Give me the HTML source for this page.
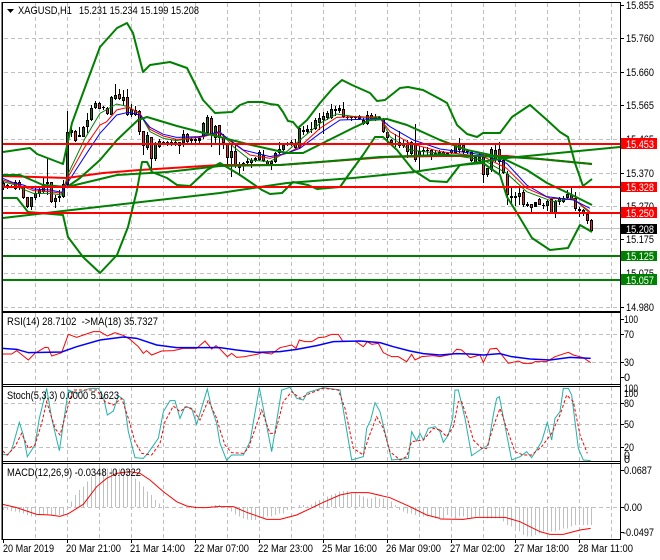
<!DOCTYPE html>
<html><head><meta charset="utf-8"><style>
html,body{margin:0;padding:0;background:#fff}
svg{display:block}
text{font-family:"Liberation Sans",sans-serif;font-size:11px;fill:#000}
.w{fill:#fff}
.n *{vector-effect:non-scaling-stroke;fill:none}
.bb{fill:none;stroke:#008000;stroke-width:2;stroke-linejoin:round}
.t{fill:none;stroke-width:1}
</style></head><body>
<svg width="660" height="560" viewBox="0 0 660 560" xmlns="http://www.w3.org/2000/svg">
<rect width="660" height="560" fill="#fff"/>
<!-- grid -->
<path fill="none" stroke="#c0c0c0" stroke-dasharray="4 3" shape-rendering="crispEdges" d="M35.5 3V309M67.5 3V309M99.5 3V309M131.5 3V309M163.5 3V309M195.5 3V309M227.5 3V309M259.5 3V309M291.5 3V309M323.5 3V309M355.5 3V309M387.5 3V309M419.5 3V309M451.5 3V309M483.5 3V309M515.5 3V309M547.5 3V309M579.5 3V309M611.5 3V309
M35.5 313V384M67.5 313V384M99.5 313V384M131.5 313V384M163.5 313V384M195.5 313V384M227.5 313V384M259.5 313V384M291.5 313V384M323.5 313V384M355.5 313V384M387.5 313V384M419.5 313V384M451.5 313V384M483.5 313V384M515.5 313V384M547.5 313V384M579.5 313V384M611.5 313V384
M35.5 387V461M67.5 387V461M99.5 387V461M131.5 387V461M163.5 387V461M195.5 387V461M227.5 387V461M259.5 387V461M291.5 387V461M323.5 387V461M355.5 387V461M387.5 387V461M419.5 387V461M451.5 387V461M483.5 387V461M515.5 387V461M547.5 387V461M579.5 387V461M611.5 387V461
M35.5 464V539M67.5 464V539M99.5 464V539M131.5 464V539M163.5 464V539M195.5 464V539M227.5 464V539M259.5 464V539M291.5 464V539M323.5 464V539M355.5 464V539M387.5 464V539M419.5 464V539M451.5 464V539M483.5 464V539M515.5 464V539M547.5 464V539M579.5 464V539M611.5 464V539
M4 38.5H620M4 72.5H620M4 105.5H620M4 139.5H620M4 173.5H620M4 206.5H620M4 239.5H620M4 273.5H620M4 307.5H620
M4 334.5H620M4 362.5H620M4 403.5H620M4 424.5H620M4 447.5H620M4 507.5H620"/>
<path stroke="#c0c0c0" d="M3 228.5H620"/>
<!-- MACD histogram -->
<g class="n" transform="translate(0,305) scale(.33333)"><path stroke="#c0c0c0" stroke-width="1" shape-rendering="crispEdges" d="M10.5 606V615M22.5 606V615M34.5 606V618M46.5 606V620M58.5 606V622M70.5 606V625M82.5 606V630M94.5 606V635M106.5 606V630M118.5 606V628M130.5 606V630M142.5 606V630M154.5 606V632M166.5 606V630M178.5 606V630M190.5 606V628M202.5 606V610M214.5 606V590M226.5 606V570M238.5 606V555M250.5 606V545M262.5 606V530M274.5 606V515M286.5 606V505M298.5 606V500M310.5 606V495M322.5 606V490M334.5 606V490M346.5 606V490M358.5 606V490M370.5 606V490M382.5 606V495M394.5 606V510M406.5 606V520M418.5 606V530M430.5 606V545M442.5 606V560M454.5 606V570M466.5 606V585M478.5 606V595M490.5 606V600M502.5 606V604M574.5 606V609M586.5 606V609M610.5 606V610M634.5 606V603M646.5 606V600M658.5 606V600M670.5 606V605M682.5 606V612M694.5 606V620M706.5 606V628M718.5 606V635M730.5 606V640M742.5 606V643M754.5 606V645M766.5 606V645M778.5 606V640M790.5 606V640M802.5 606V635M814.5 606V635M826.5 606V630M838.5 606V625M850.5 606V625M862.5 606V615M874.5 606V610M898.5 606V600M910.5 606V600M922.5 606V605M934.5 606V598M946.5 606V590M958.5 606V585M970.5 606V580M982.5 606V575M994.5 606V570M1006.5 606V565M1018.5 606V560M1030.5 606V558M1042.5 606V558M1054.5 606V565M1066.5 606V570M1078.5 606V570M1090.5 606V575M1102.5 606V580M1114.5 606V580M1126.5 606V575M1138.5 606V580M1150.5 606V580M1162.5 606V580M1174.5 606V590M1186.5 606V600M1198.5 606V615M1210.5 606V620M1222.5 606V625M1234.5 606V625M1246.5 606V630M1258.5 606V635M1270.5 606V635M1282.5 606V635M1294.5 606V635M1306.5 606V640M1318.5 606V640M1330.5 606V640M1342.5 606V630M1354.5 606V635M1366.5 606V640M1378.5 606V635M1390.5 606V635M1402.5 606V640M1414.5 606V640M1426.5 606V635M1438.5 606V635M1450.5 606V640M1462.5 606V640M1474.5 606V640M1486.5 606V640M1498.5 606V640M1510.5 606V650M1522.5 606V660M1534.5 606V665M1546.5 606V670M1558.5 606V680M1570.5 606V690M1582.5 606V695M1594.5 606V695M1606.5 606V690M1618.5 606V685M1630.5 606V680M1642.5 606V680M1654.5 606V680M1666.5 606V680M1678.5 606V675M1690.5 606V670M1702.5 606V670M1714.5 606V665M1726.5 606V660M1738.5 606V660M1750.5 606V660M1762.5 606V660M1774.5 606V660"/></g>
<!-- candles -->
<g fill="none" shape-rendering="crispEdges">
<path stroke="#000" d="M3.5 181V190M7.5 184V189M11.5 185V188M15.5 180V190M19.5 180V190M23.5 186V199M27.5 197V208M31.5 197V210M35.5 187V200M39.5 187V197M43.5 178V193M47.5 159V195M51.5 182V203M55.5 195V208M59.5 190V202M63.5 180V198M67.5 111V186M71.5 123V137M75.5 130V142M79.5 127V137M83.5 126V137M87.5 113V133M91.5 105V121M95.5 101V109M99.5 102V109M103.5 106V110M107.5 107V115M111.5 96V115M115.5 84V100M119.5 89V100M123.5 90V105M127.5 89V116M131.5 104V117M135.5 106V116M139.5 110V135M143.5 131V155M147.5 132V150M151.5 137V170M155.5 142V161M159.5 139V148M163.5 141V145M167.5 141V146M171.5 140V146M175.5 139V146M179.5 142V154M183.5 130V147M187.5 133V143M191.5 137V143M195.5 137V143M199.5 136V143M203.5 122V139M207.5 115V134M211.5 116V147M215.5 125V145M219.5 125V155M223.5 134V149M227.5 143V168M231.5 145V177M235.5 145V168M239.5 162V176M243.5 162V171M247.5 158V165M251.5 158V168M255.5 157V162M259.5 150V161M263.5 150V162M267.5 160V166M271.5 160V170M275.5 152V163M279.5 142V154M283.5 143V151M287.5 142V146M291.5 140V146M295.5 139V149M299.5 127V149M303.5 126V135M307.5 125V134M311.5 122V133M315.5 118V130M319.5 113V130M323.5 112V134M327.5 111V120M331.5 104V119M335.5 106V116M339.5 105V113M343.5 102V118M347.5 116V120M351.5 116V121M355.5 116V119M359.5 115V120M363.5 118V125M367.5 111V125M371.5 113V120M375.5 114V121M379.5 116V120M383.5 118V133M387.5 131V143M391.5 139V145M395.5 134V147M399.5 131V148M403.5 140V148M407.5 140V158M411.5 141V156M415.5 124V162M419.5 146V170M423.5 147V157M427.5 147V155M431.5 149V160M435.5 150V157M439.5 150V156M443.5 151V156M447.5 152V156M451.5 149V154M455.5 143V154M459.5 138V153M463.5 143V154M467.5 149V154M471.5 150V162M475.5 155V164M479.5 152V162M483.5 156V183M487.5 168V177M491.5 147V172M495.5 145V162M499.5 142V175M503.5 157V174M507.5 171V205M511.5 188V205M515.5 192V206M519.5 188V205M523.5 190V207M527.5 202V207M531.5 204V212M535.5 202V207M539.5 198V205M543.5 203V209M547.5 200V211M551.5 198V213M555.5 200V218M559.5 197V205M563.5 196V203M567.5 190V199M571.5 188V200M575.5 192V211M579.5 207V217M583.5 209V216M587.5 213V224M591.5 219V232"/>
<path stroke="#000" stroke-width="3" d="M3.5 183V188M7.5 185V188M11.5 186V187M15.5 182V189M19.5 182V187M23.5 187V198M27.5 197V207M31.5 197V207M35.5 193V198M39.5 190V194M43.5 184V192M47.5 182V184M51.5 182V202M55.5 198V202M59.5 196V198M63.5 184V197M67.5 132V185M71.5 130V133M75.5 131V141M79.5 135V137M83.5 127V137M87.5 120V127M91.5 108V120M95.5 103V108M99.5 103V109M103.5 107V108M107.5 108V114M111.5 97V115M115.5 95V99M119.5 94V99M123.5 97V101M127.5 97V115M131.5 109V115M135.5 110V115M139.5 111V132M143.5 131V146M147.5 135V148M151.5 137V159M155.5 143V159M159.5 141V147M163.5 142V144M167.5 142V143M171.5 142V143M175.5 142V145M179.5 142V146M183.5 134V143M187.5 134V142M191.5 139V141M195.5 139V141M199.5 138V141M203.5 123V137M207.5 117V133M211.5 118V135M215.5 126V138M219.5 125V138M223.5 137V143M227.5 144V158M231.5 151V158M235.5 151V166M239.5 164V168M243.5 163V165M247.5 161V163M251.5 160V163M255.5 158V161M259.5 152V160M263.5 155V161M267.5 161V165M271.5 161V164M275.5 153V162M279.5 149V153M283.5 145V150M287.5 143V145M291.5 142V145M295.5 144V148M299.5 128V148M303.5 130V132M307.5 129V132M311.5 129V130M315.5 120V129M319.5 118V123M323.5 116V120M327.5 113V118M331.5 109V118M335.5 109V111M339.5 108V111M343.5 109V117M347.5 117V118M351.5 117V118M355.5 117V118M359.5 116V119M363.5 120V124M367.5 115V124M371.5 115V120M375.5 117V119M379.5 117V120M383.5 119V132M387.5 132V138M391.5 140V143M395.5 143V144M399.5 142V146M403.5 143V146M407.5 143V152M411.5 142V154M415.5 143V160M419.5 151V157M423.5 150V152M427.5 150V151M431.5 150V155M435.5 153V156M439.5 152V155M443.5 152V155M447.5 153V155M451.5 150V153M455.5 144V153M459.5 144V150M463.5 145V152M467.5 150V152M471.5 152V161M475.5 157V163M479.5 157V161M483.5 157V175M487.5 168V175M491.5 149V170M495.5 150V160M499.5 149V162M503.5 160V173M507.5 174V195M511.5 196V198M515.5 196V198M519.5 193V197M523.5 192V205M527.5 204V206M531.5 204V208M535.5 202V207M539.5 199V205M543.5 205V206M547.5 201V206M551.5 199V213M555.5 201V213M559.5 198V202M563.5 198V202M567.5 194V198M571.5 195V199M575.5 198V209M579.5 209V211M583.5 210V214M587.5 214V221M591.5 220V231"/>
<path stroke="#ff2020" d="M3.5 184V187M19.5 183V186M23.5 188V197M27.5 198V206M51.5 183V201M75.5 132V140M99.5 104V108M107.5 109V113M119.5 95V98M127.5 98V114M135.5 111V114M139.5 112V131M143.5 132V145M151.5 138V158M175.5 143V144M179.5 143V145M187.5 135V141M211.5 119V134M219.5 126V137M223.5 138V142M227.5 145V157M235.5 152V165M263.5 156V160M271.5 162V163M295.5 145V147M343.5 110V116M363.5 121V123M371.5 116V119M383.5 120V131M387.5 133V137M391.5 141V142M399.5 143V145M407.5 144V151M415.5 144V159M431.5 151V154M443.5 153V154M463.5 146V151M471.5 153V160M483.5 158V174M499.5 150V161M503.5 161V172M507.5 175V194M523.5 193V204M531.5 205V207M539.5 200V204M551.5 200V212M575.5 199V208M583.5 211V213M587.5 215V220M591.5 221V230"/>
<path stroke="#008000" d="M7.5 186V187M15.5 183V188M31.5 198V206M35.5 194V197M39.5 191V193M43.5 185V191M55.5 199V201M63.5 185V196M67.5 133V184M83.5 128V136M87.5 121V126M91.5 109V119M95.5 104V107M111.5 98V114M115.5 96V98M123.5 98V100M131.5 110V114M147.5 136V147M155.5 144V158M159.5 142V146M183.5 135V142M203.5 124V136M207.5 118V132M215.5 127V137M231.5 152V157M239.5 165V167M251.5 161V162M259.5 153V159M267.5 162V164M275.5 154V161M279.5 150V152M283.5 146V149M299.5 129V147M315.5 121V128M319.5 119V122M323.5 117V119M327.5 114V117M331.5 110V117M367.5 116V123M411.5 143V153M419.5 152V156M435.5 154V155M451.5 151V152M455.5 145V152M459.5 145V149M475.5 158V162M479.5 158V160M487.5 169V174M491.5 150V169M495.5 151V159M519.5 194V196M547.5 202V205M555.5 202V212M559.5 199V201M563.5 199V201M567.5 195V197M571.5 196V198"/>
</g>
<!-- thin EMAs -->
<g class="n" transform="scale(.33333)">
<polyline class="t" stroke="#008000" points="8,545 40,553 70,568 100,580 150,580 185,585 205,520 255,415 300,340 350,312 385,320 420,342 450,395 490,415 530,422 600,410 660,395"/>
<polyline class="t" stroke="#ff0000" points="8,540 40,550 70,560 100,572 150,575 185,580 205,530 255,440 300,375 320,365 350,330 385,322 420,340 450,388 490,408 530,418 600,412 660,398"/>
<polyline class="t" stroke="#0000ff" points="8,535 40,548 70,555 100,567 150,570 185,577 205,545 260,460 300,400 350,345 385,337 420,345 450,382 490,403 530,412 600,410 660,395"/>
</g>
<g class="n" transform="translate(220,0) scale(.33333)">
<polyline class="t" stroke="#008000" points="0,395 40,440 90,480 150,485 200,455 240,420 300,370 350,342 420,352 480,350 510,410 570,450 660,460"/>
<polyline class="t" stroke="#ff0000" points="0,400 40,430 90,465 150,475 200,460 240,440 300,385 350,352 420,350 480,355 510,395 570,430 660,455"/>
<polyline class="t" stroke="#0000ff" points="0,398 30,420 70,450 150,470 200,460 240,445 300,400 360,360 420,358 480,355 510,380 580,420 660,447"/>
</g>
<g class="n" transform="translate(440,0) scale(.33333)">
<polyline class="t" stroke="#008000" points="0,460 130,480 200,520 260,575 340,605 400,595 450,640"/>
<polyline class="t" stroke="#ff0000" points="0,455 130,470 200,505 260,565 330,595 400,597 450,635"/>
<polyline class="t" stroke="#0000ff" points="0,447 60,455 130,465 200,490 260,555 320,590 400,600 450,625"/>
</g>
<!-- long MAs & bands -->
<polyline fill="none" stroke="#ff0000" stroke-width="2" points="3,176 67,178 103,173 140,170 220,165 280,165 320,162 387,157 440,156 507,156 540,159 592,164"/>
<polyline class="bb" points="3,152 30,148 37,154 63,164 72,123 87,82 100,47 117,28 127,23 133,33 143,72 150,65 170,62 187,68 203,100 215,113 232,112 240,105 248,102 262,102 270,104 278,105 283,112 288,121 293,122 298,128 307,120 320,103 333,88 342,80 352,85 370,93 377,101 385,100 400,88 408,87 423,90 440,99 447,103 457,125 467,134 477,137 483,133 500,133 512,117 530,105 547,120 560,132 568,137 575,163 583,186 592,179"/>
<polyline class="bb" points="3,198 17,198 28,212 63,215 68,237 83,257 100,273 117,255 128,227 137,190 142,162 147,162 152,172 167,178 177,185 190,186 207,170 220,163 240,175 262,190 270,194 282,193 293,182 308,185 317,189 340,187 352,170 363,155 375,137 383,137 397,150 413,170 430,181 447,182 460,165 483,163 500,175 507,197 517,213 532,238 550,250 568,248 580,225 592,232"/>
<polyline class="bb" points="3,175 20,175 43,185 67,187 80,178 100,160 117,140 138,120 147,117 177,126 200,132 220,137 247,144 287,153 303,153 323,143 353,128 370,120 387,119 407,125 440,140 467,150 500,157 527,170 547,183 568,193 592,205"/>
<polyline class="bb" points="3,218 63,211 220,193 287,183 353,178 413,172 440,168 507,158 620,147"/>
<polyline class="bb" points="67,187 117,175 167,172 220,166 280,165 320,162 380,157 440,155 507,157 540,159 592,164"/>
<!-- horizontal levels -->
<path fill="#ff0000" d="M3 143h617v2H3zM3 186h617v2H3zM3 212h617v2H3z"/>
<path fill="#008000" d="M3 255h617v2H3zM3 279h617v2H3z"/>
<!-- RSI -->
<g class="n" transform="translate(0,305) scale(.33333)">
<polyline class="t" stroke="#ff0000" points="8,147 35,147 50,137 85,165 105,145 135,127 145,128 155,153 185,143 205,88 230,97 280,80 300,80 322,93 345,83 372,92 390,103 415,125 430,145 440,137 455,150 485,138 520,137 550,130 590,130 615,108 635,132 648,122 660,132"/>
<polyline class="t" stroke="#0000ff" style="stroke-width:1.5" points="8,130 50,133 85,143 130,142 185,141 230,125 300,105 370,96 410,100 470,120 530,128 660,128"/>
<polyline class="t" stroke="#20b2aa" points="8,448 22,450 35,435 58,352 70,390 82,455 105,420 118,340 140,250 155,340 178,437 205,255 230,265 270,250 295,250 310,275 322,330 340,318 355,272 372,285 385,380 405,458 430,460 445,443 475,400 490,320 510,287 525,287 540,340 555,305 575,310 590,358 622,252 635,310 650,355 660,415"/>
<polyline class="t" stroke="#ff0000" stroke-dasharray="3 2" points="8,438 22,450 45,425 65,385 85,430 105,420 125,355 140,290 165,370 180,390 205,300 220,255 290,255 315,290 340,300 365,280 385,340 405,410 425,445 455,450 480,415 495,350 520,303 540,320 560,305 580,315 600,345 625,285 650,340 660,375"/>
<polyline class="t" stroke="#ff0000" points="8,598 50,608 110,628 150,630 180,634 205,626 250,598 290,545 320,520 350,505 390,500 420,505 450,525 490,560 530,590 560,603 590,608 620,608 660,604"/>
</g>
<g class="n" transform="translate(220,305) scale(.33333)">
<polyline class="t" stroke="#ff0000" points="0,132 22,155 35,145 50,157 75,155 115,147 125,143 155,147 180,128 215,120 228,130 238,105 255,110 275,110 295,98 315,96 335,88 355,88 368,108 405,108 430,125 442,110 455,118 475,115 490,143 515,155 535,155 560,170 575,148 585,165 605,155 640,152 660,155"/>
<polyline class="t" stroke="#0000ff" style="stroke-width:1.5" points="0,128 50,135 110,142 180,140 230,133 290,122 340,110 420,108 480,113 520,125 570,138 610,146 660,150"/>
<polyline class="t" stroke="#20b2aa" points="0,415 20,466 35,450 70,450 90,410 118,248 155,440 185,255 210,247 230,280 250,285 262,263 310,248 360,255 395,465 430,455 440,370 452,345 465,293 480,320 515,465 565,460 575,380 590,408 600,385 610,405 625,370 645,365 660,380"/>
<polyline class="t" stroke="#ff0000" stroke-dasharray="3 2" points="0,375 15,420 35,443 70,445 85,430 125,315 150,385 165,385 190,290 215,260 240,280 270,265 310,250 355,255 375,310 400,430 430,450 445,400 470,335 490,370 510,440 540,465 560,455 575,410 610,405 640,370 660,375"/>
<polyline class="t" stroke="#ff0000" points="0,605 40,605 80,622 140,643 180,643 230,630 310,592 360,570 395,563 445,563 510,578 570,605 620,630 660,640"/>
</g>
<g class="n" transform="translate(440,305) scale(.33333)">
<polyline class="t" stroke="#ff0000" points="0,155 35,148 50,133 65,135 90,158 120,150 130,172 150,132 170,130 205,175 235,168 250,175 275,175 285,170 320,170 345,155 385,142 400,150 430,158 452,173"/>
<polyline class="t" stroke="#0000ff" style="stroke-width:1.5" points="0,150 50,146 90,147 130,150 180,146 215,155 270,162 330,165 390,157 452,160"/>
<polyline class="t" stroke="#20b2aa" points="0,380 10,412 25,390 38,340 45,255 55,255 75,340 95,452 120,435 145,420 160,330 170,280 178,275 215,465 240,455 260,440 275,458 305,410 322,352 335,405 345,340 360,320 370,250 385,250 395,270 415,430 430,465 452,467"/>
<polyline class="t" stroke="#ff0000" stroke-dasharray="3 2" points="0,375 20,395 40,365 55,290 65,290 85,350 100,405 125,430 140,430 160,365 180,310 200,370 225,440 250,450 275,450 305,425 335,385 360,330 380,270 400,290 420,390 442,445"/>
<polyline class="t" stroke="#ff0000" points="0,642 70,643 110,637 195,637 240,650 300,680 330,688 370,688 420,675 452,670"/>
</g>
<!-- frames -->
<path fill="none" stroke="#000" shape-rendering="crispEdges" d="M2.5 2.5H620.5V539.5H2.5ZM2.5 311.5H620.5M2.5 312.5H620.5M2.5 384.5H620.5M2.5 386.5H620.5M2.5 461.5H620.5M2.5 463.5H620.5M2 2V540"/>
<rect x="2" y="2" width="1" height="538" fill="#000"/>
<!-- axis ticks -->
<path fill="none" stroke="#000" shape-rendering="crispEdges" d="M621 5.5h3M621 38.5h3M621 72.5h3M621 105.5h3M621 173.5h3M621 239.5h3M621 307.5h3M621 334.5h3M621 362.5h3M621 319.5h3M621 377.5h3M621 403.5h3M621 424.5h3M621 447.5h3M621 470.5h3M621 507.5h3M621 532.5h3M3.5 540v3M67.5 540v3M131.5 540v3M195.5 540v3M259.5 540v3M323.5 540v3M387.5 540v3M451.5 540v3M515.5 540v3M579.5 540v3"/>
<!-- header -->
<path d="M7 9h7l-3.500 4z" fill="#000"/>
<text x="18" y="14" textLength="54" lengthAdjust="spacingAndGlyphs">XAGUSD,H1</text>
<text x="79" y="14" textLength="120" lengthAdjust="spacingAndGlyphs">15.231 15.234 15.199 15.208</text>
<text x="7" y="325" textLength="151" lengthAdjust="spacingAndGlyphs" xml:space="preserve">RSI(14) 28.7102  -&gt;MA(18) 35.7327</text>
<text x="7" y="399" textLength="112" lengthAdjust="spacingAndGlyphs">Stoch(5,3,3) 0.0000 5.1623</text>
<text x="7" y="476" textLength="134" lengthAdjust="spacingAndGlyphs">MACD(12,26,9) -0.0348 -0.0322</text>
<!-- price axis -->
<text x="626" y="9" textLength="28" lengthAdjust="spacingAndGlyphs">15.855</text>
<text x="626" y="42" textLength="28" lengthAdjust="spacingAndGlyphs">15.760</text>
<text x="626" y="76" textLength="28" lengthAdjust="spacingAndGlyphs">15.660</text>
<text x="626" y="109" textLength="28" lengthAdjust="spacingAndGlyphs">15.565</text>
<text x="626" y="177" textLength="28" lengthAdjust="spacingAndGlyphs">15.370</text>
<text x="626" y="210" textLength="28" lengthAdjust="spacingAndGlyphs">15.270</text>
<text x="626" y="243" textLength="28" lengthAdjust="spacingAndGlyphs">15.175</text>
<text x="626" y="277" textLength="28" lengthAdjust="spacingAndGlyphs">15.075</text>
<text x="626" y="311" textLength="28" lengthAdjust="spacingAndGlyphs">14.980</text>
<text x="626" y="143" textLength="28" lengthAdjust="spacingAndGlyphs">15.465</text>
<rect x="621" y="138" width="36" height="11" fill="#ff0000"/><text class="w" x="626" y="148" textLength="28" lengthAdjust="spacingAndGlyphs">15.453</text>
<rect x="621" y="182" width="36" height="10" fill="#ff0000"/><text class="w" x="626" y="191" textLength="28" lengthAdjust="spacingAndGlyphs">15.328</text>
<rect x="621" y="207" width="36" height="11" fill="#ff0000"/><text class="w" x="626" y="217" textLength="28" lengthAdjust="spacingAndGlyphs">15.250</text>
<rect x="621" y="224" width="36" height="10" fill="#000"/><text class="w" x="626" y="233" textLength="28" lengthAdjust="spacingAndGlyphs">15.208</text>
<rect x="621" y="251" width="36" height="10" fill="#008000"/><text class="w" x="626" y="260" textLength="28" lengthAdjust="spacingAndGlyphs">15.125</text>
<rect x="621" y="274" width="36" height="11" fill="#008000"/><text class="w" x="626" y="284" textLength="28" lengthAdjust="spacingAndGlyphs">15.057</text>
<!-- indicator axes -->
<text x="624" y="323" textLength="14" lengthAdjust="spacingAndGlyphs">100</text>
<text x="624" y="338" textLength="10" lengthAdjust="spacingAndGlyphs">70</text>
<text x="624" y="366" textLength="10" lengthAdjust="spacingAndGlyphs">30</text>
<text x="624" y="381">0</text>
<text x="624" y="392" textLength="14" lengthAdjust="spacingAndGlyphs">100</text>
<text x="624" y="397" textLength="14" lengthAdjust="spacingAndGlyphs">100</text>
<text x="624" y="407" textLength="10" lengthAdjust="spacingAndGlyphs">80</text>
<text x="624" y="428" textLength="10" lengthAdjust="spacingAndGlyphs">50</text>
<text x="624" y="451" textLength="10" lengthAdjust="spacingAndGlyphs">20</text>
<text x="624" y="459" textLength="6" lengthAdjust="spacingAndGlyphs">0</text>
<text x="624" y="463" textLength="6" lengthAdjust="spacingAndGlyphs">0</text>
<text x="624" y="474" textLength="28" lengthAdjust="spacingAndGlyphs">0.0687</text>
<text x="624" y="511" textLength="18" lengthAdjust="spacingAndGlyphs">0.00</text>
<text x="623" y="536" textLength="31" lengthAdjust="spacingAndGlyphs">-0.0497</text>
<!-- time axis -->
<text x="3" y="552" textLength="51" lengthAdjust="spacingAndGlyphs">20 Mar 2019</text>
<text x="66" y="552" textLength="55" lengthAdjust="spacingAndGlyphs">20 Mar 21:00</text>
<text x="130" y="552" textLength="55" lengthAdjust="spacingAndGlyphs">21 Mar 14:00</text>
<text x="194" y="552" textLength="55" lengthAdjust="spacingAndGlyphs">22 Mar 07:00</text>
<text x="258" y="552" textLength="55" lengthAdjust="spacingAndGlyphs">22 Mar 23:00</text>
<text x="322" y="552" textLength="55" lengthAdjust="spacingAndGlyphs">25 Mar 16:00</text>
<text x="386" y="552" textLength="55" lengthAdjust="spacingAndGlyphs">26 Mar 09:00</text>
<text x="450" y="552" textLength="55" lengthAdjust="spacingAndGlyphs">27 Mar 02:00</text>
<text x="514" y="552" textLength="55" lengthAdjust="spacingAndGlyphs">27 Mar 18:00</text>
<text x="578" y="552" textLength="55" lengthAdjust="spacingAndGlyphs">28 Mar 11:00</text>
</svg>
</body></html>
